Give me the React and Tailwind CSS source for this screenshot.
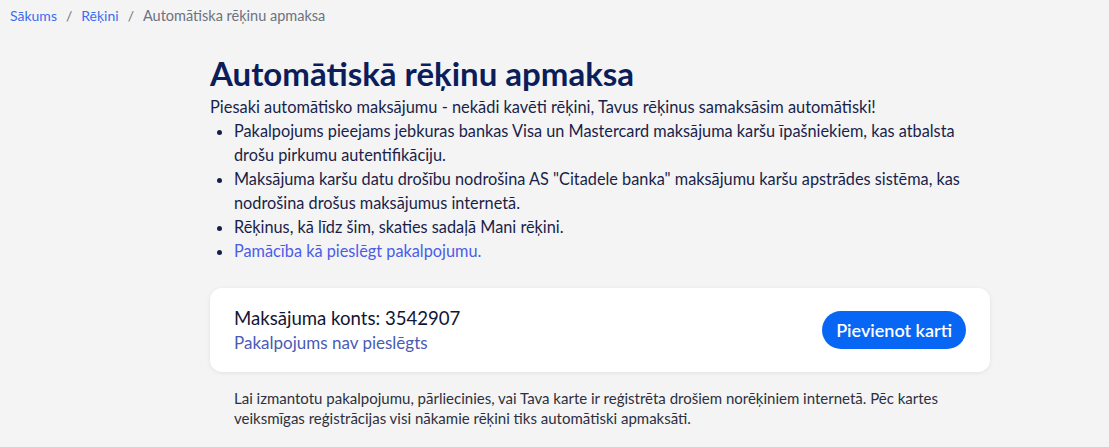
import React from 'react';

const bullets = [
  'Pakalpojums pieejams jebkuras bankas Visa un Mastercard maksājuma karšu īpašniekiem, kas atbalsta drošu pirkumu autentifikāciju.',
  'Maksājuma karšu datu drošību nodrošina AS "Citadele banka" maksājumu karšu apstrādes sistēma, kas nodrošina drošus maksājumus internetā.',
  'Rēķinus, kā līdz šim, skaties sadaļā Mani rēķini.',
];

function App() {
  return (
    <div className="min-h-[447px] bg-[#f4f4f4] text-[#1a1f4a]" style={{ fontFamily: 'Lato, "Open Sans", sans-serif' }}>
      {/* Breadcrumb */}
      <nav className="px-[10px] pt-[6px] text-[14px] leading-[20px] text-[#6b7280]">
        <a href="#" className="text-[#3b6cf0]">Sākums</a>
        <span className="mx-[9px]">/</span>
        <a href="#" className="text-[#3b6cf0]">Rēķini</a>
        <span className="mx-[9px]">/</span>
        <span className="text-[14.5px]">Automātiska rēķinu apmaksa</span>
      </nav>

      <main className="ml-[210px] w-[780px] pt-[27px]">
        <h1 className="text-[33px] font-bold leading-[40px] text-[#0b1d5a]">Automātiskā rēķinu apmaksa</h1>
        <p className="mt-[2px] text-[16.4px] leading-[24px]">
          Piesaki automātisko maksājumu - nekādi kavēti rēķini, Tavus rēķinus samaksāsim automātiski!
        </p>
        <ul className="list-disc pl-[24px] text-[16.3px] leading-[24px]">
          {bullets.map((b, i) => (
            <li key={i}>{b}</li>
          ))}
          <li>
            <a href="#" className="text-[#4a5de6]">Pamācība kā pieslēgt pakalpojumu.</a>
          </li>
        </ul>

        {/* Account card */}
        <div className="mt-[25px] flex items-center justify-between rounded-[12px] bg-white py-[17px] px-[24px] shadow-[0_1px_4px_rgba(0,0,0,0.08)]">
          <div>
            <div className="text-[18.6px] leading-[26px] text-[#111634]">Maksājuma konts: 3542907</div>
            <a href="#" className="text-[17px] leading-[24px] text-[#4a5bb5]">Pakalpojums nav pieslēgts</a>
          </div>
          <button className="h-[38px] rounded-full bg-[#0866f5] px-[14px] text-[18px] font-semibold text-white">
            Pievienot karti
          </button>
        </div>

        <p className="mt-[16px] px-[24px] text-[15px] leading-[20px] text-[#2d3040]">
          Lai izmantotu pakalpojumu, pārliecinies, vai Tava karte ir reģistrēta drošiem norēķiniem internetā. Pēc kartes veiksmīgas reģistrācijas visi nākamie rēķini tiks automātiski apmaksāti.
        </p>
      </main>
    </div>
  );
}

export default App;
